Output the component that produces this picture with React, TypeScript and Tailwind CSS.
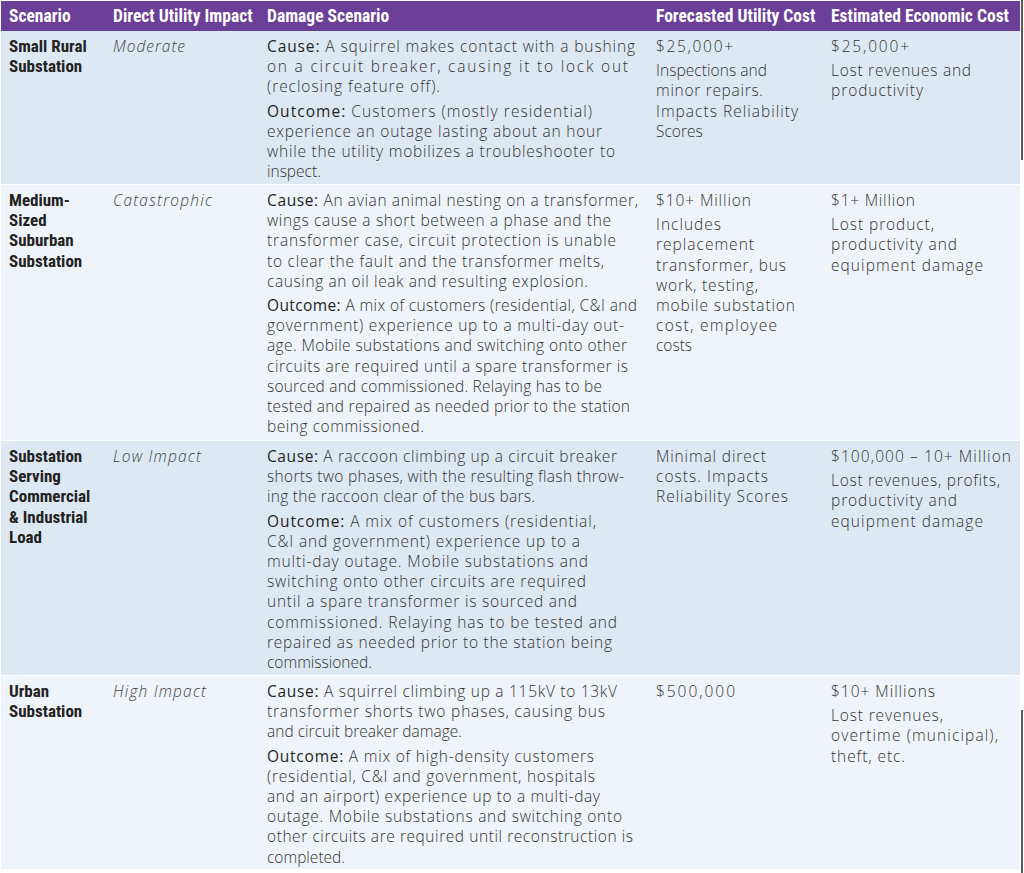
import React, { useLayoutEffect, useRef, useState } from 'react';

// each line: [text, x where the line ends in the layout]
type Line = [string, number];

type Row = {
  scenario: string[];
  impact: Line;
  cause: Line[];
  outcome: Line[];
  utility: Line[];
  economic: Line[];
  bg: string;
  h: string;
};

const rows: Row[] = [
  {
    scenario: ['Small Rural', 'Substation'],
    impact: ['Moderate', 185],
    cause: [
      ['A squirrel makes contact with a bushing', 635],
      ['on a circuit breaker, causing it to lock out', 628],
      ['(reclosing feature off).', 440],
    ],
    outcome: [
      ['Customers (mostly residential)', 592],
      ['experience an outage lasting about an hour', 602],
      ['while the utility mobilizes a troubleshooter to', 615],
      ['inspect.', 0],
    ],
    utility: [
      ['$25,000+', 733],
      ['Inspections and', 767],
      ['minor repairs.', 763],
      ['Impacts Reliability', 798],
      ['Scores', 0],
    ],
    economic: [
      ['$25,000+', 909],
      ['Lost revenues and', 971],
      ['productivity', 923],
    ],
    bg: 'bg-[#dde8f3]',
    h: 'h-[153px]',
  },
  {
    scenario: ['Medium-', 'Sized', 'Suburban', 'Substation'],
    impact: ['Catastrophic', 212],
    cause: [
      ['An avian animal nesting on a transformer,', 638],
      ['wings cause a short between a phase and the', 611],
      ['transformer case, circuit protection is unable', 616],
      ['to clear the fault and the transformer melts,', 604],
      ['causing an oil leak and resulting explosion.', 588],
    ],
    outcome: [
      ['A mix of customers (residential, C&I and', 637],
      ['government) experience up to a multi-day out-', 624],
      ['age. Mobile substations and switching onto other', 627],
      ['circuits are required until a spare transformer is', 628],
      ['sourced and commissioned. Relaying has to be', 602],
      ['tested and repaired as needed prior to the station', 630],
      ['being commissioned.', 424],
    ],
    utility: [
      ['$10+ Million', 751],
      ['Includes', 721],
      ['replacement', 754],
      ['transformer, bus', 786],
      ['work, testing,', 758],
      ['mobile substation', 795],
      ['cost, employee', 777],
      ['costs', 0],
    ],
    economic: [
      ['$1+ Million', 915],
      ['Lost product,', 934],
      ['productivity and', 957],
      ['equipment damage', 983],
    ],
    bg: 'bg-[#eef4f9]',
    h: 'h-[256px]',
  },
  {
    scenario: ['Substation', 'Serving', 'Commercial', '& Industrial', 'Load'],
    impact: ['Low Impact', 201],
    cause: [
      ['A raccoon climbing up a circuit breaker', 617],
      ['shorts two phases, with the resulting flash throw-', 624],
      ['ing the raccoon clear of the bus bars.', 535],
    ],
    outcome: [
      ['A mix of customers (residential,', 596],
      ['C&I and government) experience up to a', 580],
      ['multi-day outage. Mobile substations and', 588],
      ['switching onto other circuits are required', 586],
      ['until a spare transformer is sourced and', 577],
      ['commissioned. Relaying has to be tested and', 617],
      ['repaired as needed prior to the station being', 612],
      ['commissioned.', 0],
    ],
    utility: [
      ['Minimal direct', 766],
      ['costs. Impacts', 768],
      ['Reliability Scores', 788],
    ],
    economic: [
      ['$100,000 – 10+ Million', 1011],
      ['Lost revenues, profits,', 1000],
      ['productivity and', 957],
      ['equipment damage', 983],
    ],
    bg: 'bg-[#dde8f3]',
    h: 'h-[235px]',
  },
  {
    scenario: ['Urban', 'Substation'],
    impact: ['High Impact', 206],
    cause: [
      ['A squirrel climbing up a 115kV to 13kV', 617],
      ['transformer shorts two phases, causing bus', 605],
      ['and circuit breaker damage.', 462],
    ],
    outcome: [
      ['A mix of high-density customers', 594],
      ['(residential, C&I and government, hospitals', 595],
      ['and an airport) experience up to a multi-day', 600],
      ['outage. Mobile substations and switching onto', 622],
      ['other circuits are required until reconstruction is', 633],
      ['completed.', 0],
    ],
    utility: [['$500,000', 735]],
    economic: [
      ['$10+ Millions', 935],
      ['Lost revenues,', 943],
      ['overtime (municipal),', 998],
      ['theft, etc.', 905],
    ],
    bg: 'bg-[#eef4f9]',
    h: 'h-[194px]',
  },
];

const cols = 'grid grid-cols-[104px_154px_389px_175px_197px]';
const narrow = "font-['Liberation_Sans_Narrow','Roboto_Condensed','Liberation_Sans',sans-serif]";
const body = "font-['Open_Sans','Liberation_Sans',sans-serif] font-light text-[15.5px] leading-[20.2px] text-[#333]";

// stretches the letter spacing of one typeset line so it ends where the print does
function Fit({ w, children }: { w: number; children: React.ReactNode }) {
  const ref = useRef<HTMLDivElement>(null);
  const [ls, setLs] = useState(0);

  useLayoutEffect(() => {
    const measure = () => {
      const el = ref.current;
      if (!el || w <= 0) return;
      const prev = el.style.letterSpacing;
      el.style.letterSpacing = '0px';
      const natural = el.getBoundingClientRect().width;
      el.style.letterSpacing = prev;
      const n = (el.textContent || '').length;
      if (n > 1) setLs((w - natural) / (n - 1));
    };
    measure();
    document.fonts?.ready.then(measure);
  }, [w]);

  return (
    <div ref={ref} className="w-fit whitespace-nowrap" style={ls ? { letterSpacing: `${ls}px` } : undefined}>
      {children}
    </div>
  );
}

function Para({ label, lines, start }: { label: string; lines: Line[]; start: number }) {
  return (
    <div>
      {lines.map(([t, end], i) => (
        <Fit key={i} w={end ? end - start : 0}>
          {i === 0 ? (
            <>
              <span className="font-medium text-[#1f1f1f]">{label}</span> {t}
            </>
          ) : (
            t
          )}
        </Fit>
      ))}
    </div>
  );
}

function Money({ lines, start, head }: { lines: Line[]; start: number; head: boolean }) {
  const first = head ? lines.slice(0, 1) : [];
  const rest = head ? lines.slice(1) : lines;
  return (
    <div className={`${body} pl-[8px] pt-[5px] flex flex-col gap-[4px]`}>
      {first.map(([t, end], i) => (
        <Fit key={i} w={end - start}>{t}</Fit>
      ))}
      {rest.length > 0 && (
        <div>
          {rest.map(([t, end], i) => (
            <Fit key={i} w={end ? end - start : 0}>{t}</Fit>
          ))}
        </div>
      )}
    </div>
  );
}

export default function App() {
  return (
    <div className="flex bg-white w-[1024px] h-[873px] overflow-hidden">
      <div className="w-[1020px] pt-px pl-px">
        <div className={`${cols} bg-[#6b3e97] h-[30px] items-center text-white font-bold text-[17.5px] ${narrow}`}>
          <div className="pl-[8px]">Scenario</div>
          <div className="pl-[8px]">Direct Utility Impact</div>
          <div className="pl-[8px]">Damage Scenario</div>
          <div className="pl-[8px]">Forecasted Utility Cost</div>
          <div className="pl-[8px]">Estimated Economic Cost</div>
        </div>
        {rows.map((r, i) => (
          <div key={i} className={`${cols} ${r.bg} ${r.h} ${i > 0 ? 'border-t border-white' : ''}`}>
            <div className={`pl-[8px] pt-[5px] font-bold text-[17px] leading-[20.2px] text-[#222] ${narrow}`}>
              {r.scenario.map((s, j) => (
                <div key={j} className="whitespace-nowrap">{s}</div>
              ))}
            </div>
            <div className={`${body} pl-[8px] pt-[5px] italic text-[#444]`}>
              <Fit w={r.impact[1] - 113}>{r.impact[0]}</Fit>
            </div>
            <div className={`${body} pl-[8px] pt-[5px] flex flex-col gap-[4px]`}>
              <Para label="Cause:" lines={r.cause} start={267} />
              <Para label="Outcome:" lines={r.outcome} start={267} />
            </div>
            <Money lines={r.utility} start={656} head={i !== 2} />
            <Money lines={r.economic} start={831} head />
          </div>
        ))}
      </div>
      <div className="w-[4px] flex flex-col">
        <div className="h-[160px] w-[2px] ml-px bg-[#5a5a5a]" />
        <div className="h-[550px]" />
        <div className="h-[163px] w-[2px] ml-px bg-[#5a5a5a]" />
      </div>
    </div>
  );
}
